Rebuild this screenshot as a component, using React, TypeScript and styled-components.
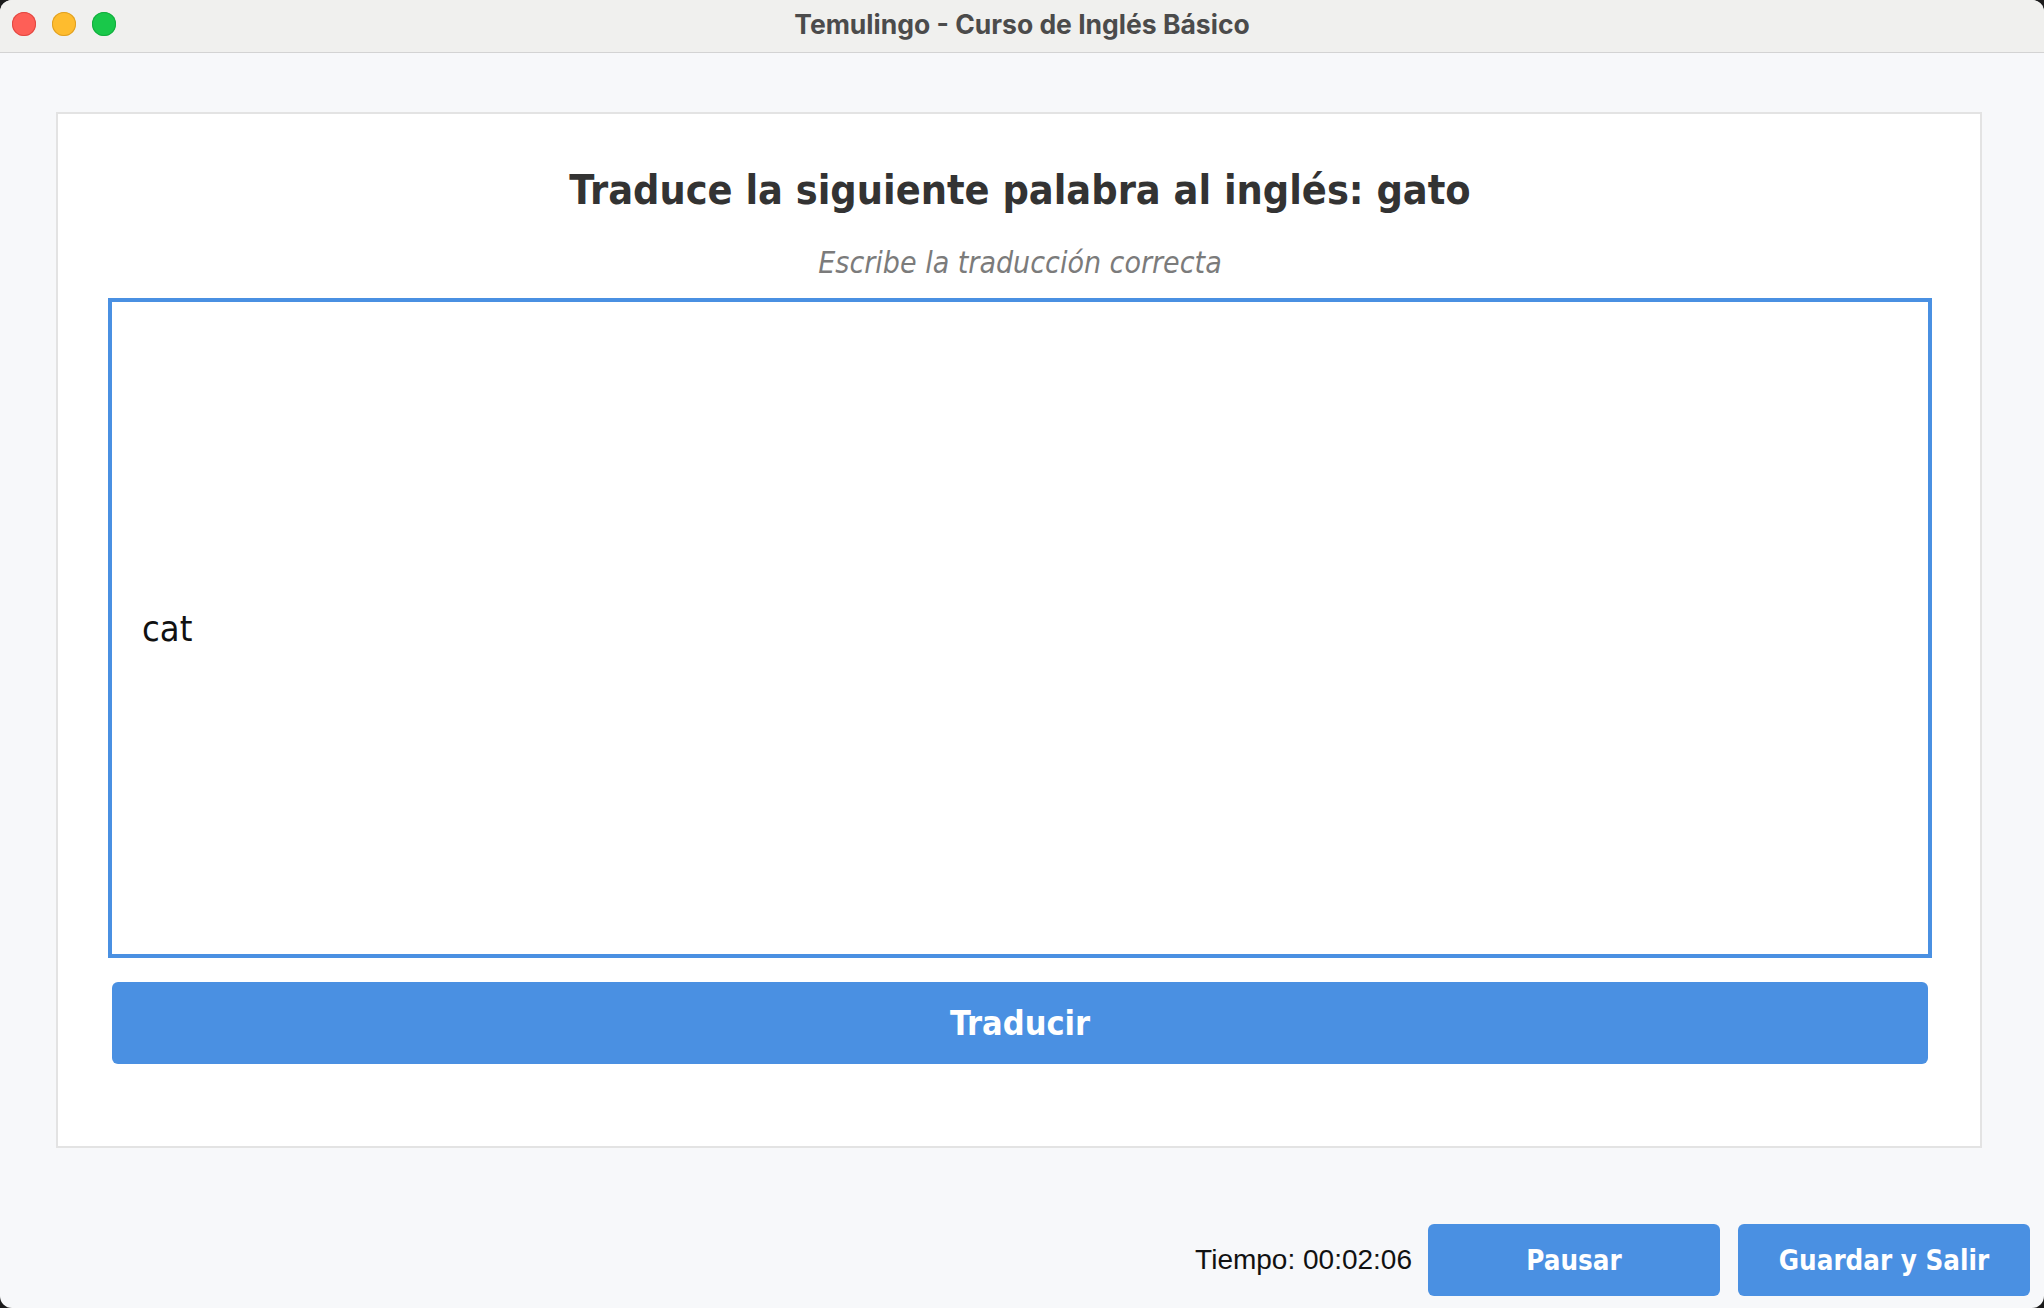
import React from "react";
import styled, { createGlobalStyle } from "styled-components";

const Global = createGlobalStyle`
  html, body {
    margin: 0;
    padding: 0;
    background: #1b1b1b;
  }
  * { box-sizing: border-box; }
`;

const Window = styled.div`
  width: 2044px;
  height: 1308px;
  display: flex;
  flex-direction: column;
  background: #f7f8fa;
  border-radius: 12px;
  overflow: hidden;
`;

const TitleBar = styled.div`
  position: relative;
  height: 53px;
  flex: none;
  display: flex;
  align-items: center;
  justify-content: center;
  background: #f0f0ee;
  border-bottom: 1px solid #d3d3d3;
`;

const Lights = styled.div`
  position: absolute;
  left: 12px;
  top: 12px;
  display: flex;
  gap: 16px;
`;

const Light = styled.span<{ $fill: string; $edge: string }>`
  width: 24px;
  height: 24px;
  border-radius: 50%;
  background: ${(p) => p.$fill};
  box-shadow: inset 0 0 0 1px ${(p) => p.$edge};
`;

const Title = styled.div`
  font-family: Inter, "Liberation Sans", sans-serif;
  font-weight: 700;
  font-size: 26.5px;
  color: #4b4b4b;
  margin-top: -5px;
`;

const Content = styled.div`
  flex: 1;
  display: flex;
  flex-direction: column;
  font-family: "DejaVu Sans Condensed", "DejaVu Sans", sans-serif;
`;

const Card = styled.div`
  margin: 59px 62px 0 56px;
  background: #ffffff;
  border: 2px solid #e3e3e3;
  padding: 52px 48px 82px 50px;
  display: flex;
  flex-direction: column;
  align-items: stretch;
`;

const Heading = styled.h1`
  margin: 0;
  text-align: center;
  font-size: 41px;
  line-height: 48px;
  font-weight: 700;
  color: #333333;
`;

const Hint = styled.p`
  margin: 31px 0 0;
  text-align: center;
  font-size: 30px;
  line-height: 36px;
  font-style: italic;
  color: #7b7b7b;
`;

const TextField = styled.div`
  margin-top: 17px;
  height: 660px;
  border: 4px solid #4a90e2;
  background: #ffffff;
  display: flex;
  align-items: center;
  padding: 0 30px;
  font-size: 36px;
  color: #111111;
`;

const WideButton = styled.button`
  margin: 24px 4px 0;
  height: 82px;
  border: none;
  border-radius: 6px;
  background: #4a90e2;
  color: #ffffff;
  font-family: "DejaVu Sans Condensed", "DejaVu Sans", sans-serif;
  font-weight: 700;
  font-size: 34px;
  cursor: pointer;
`;

const BottomBar = styled.div`
  margin-top: auto;
  display: flex;
  justify-content: flex-end;
  align-items: center;
  padding: 0 14px 12px 0;
  gap: 18px;
`;

const Timer = styled.span`
  font-family: "Liberation Sans", Arial, sans-serif;
  font-size: 28px;
  color: #111111;
  margin-right: -2px;
`;

const SmallButton = styled.button`
  width: 292px;
  height: 72px;
  border: none;
  border-radius: 6px;
  background: #4a90e2;
  color: #ffffff;
  font-family: "DejaVu Sans Condensed", "DejaVu Sans", sans-serif;
  font-weight: 700;
  font-size: 27.5px;
  cursor: pointer;
`;

export default function App() {
  return (
    <>
      <Global />
      <Window>
        <TitleBar>
          <Lights>
            <Light $fill="#fe5f57" $edge="#e14942" />
            <Light $fill="#febc2e" $edge="#dfa023" />
            <Light $fill="#19c84a" $edge="#14ad3e" />
          </Lights>
          <Title>Temulingo - Curso de Inglés Básico</Title>
        </TitleBar>
        <Content>
          <Card>
            <Heading>Traduce la siguiente palabra al inglés: gato</Heading>
            <Hint>Escribe la traducción correcta</Hint>
            <TextField>cat</TextField>
            <WideButton>Traducir</WideButton>
          </Card>
          <BottomBar>
            <Timer>Tiempo: 00:02:06</Timer>
            <SmallButton>Pausar</SmallButton>
            <SmallButton>Guardar y Salir</SmallButton>
          </BottomBar>
        </Content>
      </Window>
    </>
  );
}
